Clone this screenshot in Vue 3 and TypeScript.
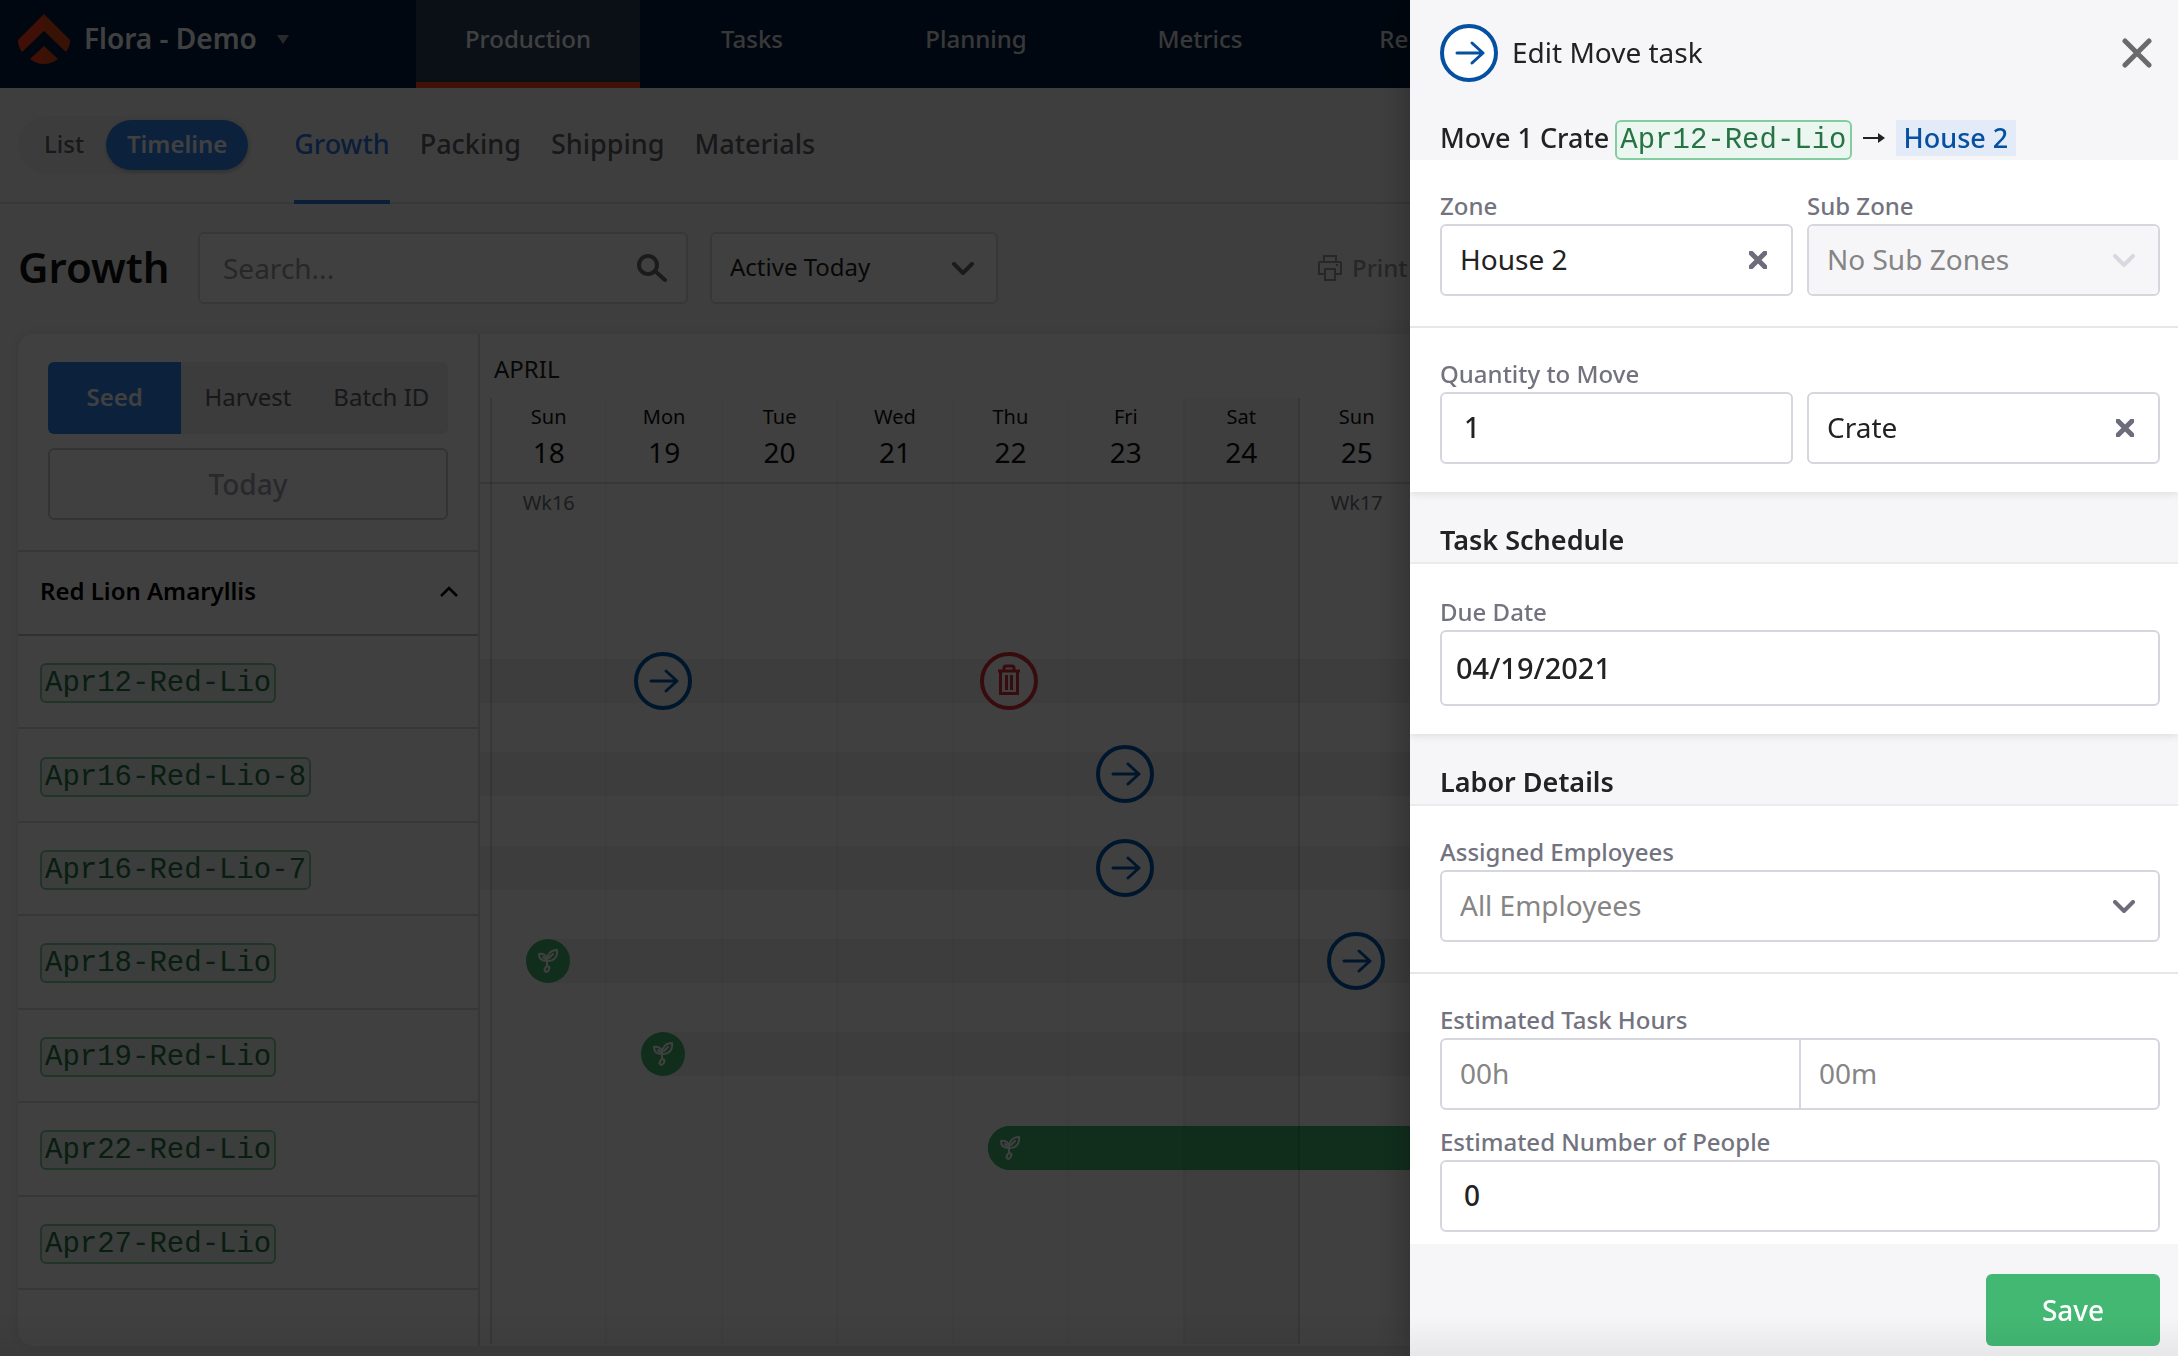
<script setup lang="ts">
import { ref } from 'vue'

interface Marker {
  day: number
  kind: 'move' | 'trash'
}

interface Batch {
  id: string
  seedDay: number | null
  planned: boolean
  hidden: boolean
  markers: Marker[]
}

interface Day {
  name: string
  date: number
  week: string
}

const navItems = ['Production', 'Tasks', 'Planning', 'Metrics', 'Reports']
const sections = ['Growth', 'Packing', 'Shipping', 'Materials']
const groupings = ['Seed', 'Harvest', 'Batch ID']

const names = ['Sun', 'Mon', 'Tue', 'Wed', 'Thu', 'Fri', 'Sat']
const dates = [18, 19, 20, 21, 22, 23, 24, 25, 26, 27, 28, 29, 30, 1]
const days: Day[] = dates.map((date, i) => ({
  name: names[i % 7],
  date,
  week: i === 0 ? 'Wk16' : i === 7 ? 'Wk17' : '',
}))

const batches: Batch[] = [
  { id: 'Apr12-Red-Lio', seedDay: null, planned: false, hidden: false, markers: [{ day: 1, kind: 'move' }, { day: 4, kind: 'trash' }] },
  { id: 'Apr16-Red-Lio-8', seedDay: null, planned: false, hidden: false, markers: [{ day: 5, kind: 'move' }] },
  { id: 'Apr16-Red-Lio-7', seedDay: null, planned: false, hidden: false, markers: [{ day: 5, kind: 'move' }] },
  { id: 'Apr18-Red-Lio', seedDay: 0, planned: false, hidden: false, markers: [{ day: 7, kind: 'move' }] },
  { id: 'Apr19-Red-Lio', seedDay: 1, planned: false, hidden: false, markers: [] },
  { id: 'Apr22-Red-Lio', seedDay: 4, planned: true, hidden: false, markers: [] },
  { id: 'Apr27-Red-Lio', seedDay: null, planned: false, hidden: true, markers: [] },
]

const search = ref('')
const filter = ref('Active Today')
const zone = ref('House 2')
const subZone = ref('No Sub Zones')
const quantity = ref('1')
const unit = ref('Crate')
const dueDate = ref('04/19/2021')
const employees = ref('All Employees')
const hours = ref('')
const minutes = ref('')
const people = ref('0')

// The grid's first column is the sliver left of Sunday the 18th.
const dayColumn = (day: number) => String(day + 2)
const barColumn = (day: number | null) => (day === null ? '1 / -1' : `${day + 2} / -1`)
</script>

<template>
  <div class="page">
    <header class="topbar">
      <button class="farm" type="button">
        <svg class="logo" viewBox="0 0 52 50" aria-hidden="true">
          <path fill="#ff4018" d="M26 0 0 26c0 4 1 8 4 12l22-21z" />
          <path fill="#e04a10" d="M26 0l26 26c0 4-1 8-4 12L26 17z" />
          <path fill="#ff4018" d="M26 32 12 45c4 3 9 5 14 5z" />
          <path fill="#e04a10" d="M26 32l14 13c-4 3-9 5-14 5z" />
        </svg>
        <span>Flora - Demo</span>
        <svg class="caret" viewBox="0 0 12 9" aria-hidden="true"><path fill="#a0a4ac" d="M0 0h12L6 9z" /></svg>
      </button>
      <nav class="nav">
        <a v-for="(item, i) in navItems" :key="item" href="#" :class="{ active: i === 0 }">{{ item }}</a>
      </nav>
    </header>

    <div class="subbar">
      <div class="toggle">
        <button type="button">List</button>
        <button type="button" class="active">Timeline</button>
      </div>
      <nav class="tabs">
        <a v-for="(s, i) in sections" :key="s" href="#" :class="{ active: i === 0 }">{{ s }}</a>
      </nav>
    </div>

    <div class="toolbar">
      <h1>Growth</h1>
      <div class="search">
        <input v-model="search" type="text" placeholder="Search..." aria-label="Search" />
        <svg viewBox="0 0 30 28" aria-hidden="true">
          <circle cx="11" cy="11" r="9" fill="none" stroke="#6c6c74" stroke-width="4" />
          <path d="M18 17l10 9" stroke="#6c6c74" stroke-width="4" stroke-linecap="round" />
        </svg>
      </div>
      <div class="filter">
        <select v-model="filter" aria-label="Filter"><option>Active Today</option></select>
        <svg class="chevron" viewBox="0 0 22 13" aria-hidden="true"><path d="M2 2l9 9 9-9" /></svg>
      </div>
      <button class="print" type="button">
        <svg viewBox="0 0 24 26" fill="none" stroke="#9a9aa6" stroke-width="2" aria-hidden="true">
          <path d="M6 7V1h12v6M6 19H1V8q0-1 1-1h20q1 0 1 1v11h-5" />
          <path d="M7 14h10v11H7z" />
          <path d="M18 10h2" />
        </svg>
        <span>Print</span>
      </button>
    </div>

    <main class="card">
      <aside class="side">
        <div class="controls">
          <div class="segments">
            <button v-for="(g, i) in groupings" :key="g" type="button" :class="{ active: i === 0 }">{{ g }}</button>
          </div>
          <button type="button" class="today">Today</button>
        </div>
        <button type="button" class="group">
          <span>Red Lion Amaryllis</span>
          <svg viewBox="0 0 18 11" fill="none" stroke="#000" stroke-width="2.5" aria-hidden="true"><path d="M1 10l8-8 8 8" /></svg>
        </button>
        <ul class="rows batch-list">
          <li v-for="b in batches" :key="b.id"><a href="#" class="batch">{{ b.id }}</a></li>
        </ul>
      </aside>

      <section class="timeline">
        <div class="month">APRIL</div>
        <div class="canvas">
          <div class="rows tracks">
            <div v-for="b in batches" :key="b.id" class="track day-grid">
              <div
                v-if="!b.hidden"
                class="bar"
                :class="{ seeded: b.seedDay !== null, planned: b.planned }"
                :style="{ gridColumn: barColumn(b.seedDay) }"
              >
                <span v-if="b.seedDay !== null" class="seed">
                  <svg viewBox="0 0 44 44" fill="none" stroke="#fff" stroke-width="2" stroke-linecap="round" aria-hidden="true">
                    <path d="M21 22c-5 0-8-2-8-7 4-1 8 1 8 7zM21 22c0-7 4-11 10-11 1 7-3 11-10 11z" />
                    <path d="M17 18l2 2M27 15l-4 4M21 22v5" />
                    <ellipse cx="21" cy="30" rx="2" ry="3" transform="rotate(30 21 30)" />
                  </svg>
                </span>
              </div>
              <div v-for="m in b.markers" :key="m.day" class="marker" :style="{ gridColumn: dayColumn(m.day) }">
                <svg v-if="m.kind === 'move'" viewBox="0 0 58 58" fill="none" stroke="#0058b0" stroke-width="3" aria-hidden="true">
                  <circle cx="29" cy="29" r="27" fill="#fff" stroke-width="4" />
                  <path d="M17 29h26M32 19l11 10-11 10" stroke-linecap="round" stroke-linejoin="round" />
                </svg>
                <svg v-else viewBox="0 0 58 58" fill="none" stroke="#e03038" stroke-width="3" aria-hidden="true">
                  <circle cx="29" cy="29" r="27" fill="#fff" stroke-width="4" />
                  <path d="M24 18v-2q0-2 2-2h6q2 0 2 2v2M18 19h22" />
                  <path d="M20.500 19v22.500h17V19M26.500 23v15M31.500 23v15" />
                </svg>
              </div>
            </div>
          </div>
          <div class="columns day-grid">
            <div v-for="(d, i) in days" :key="i" class="day" :class="{ sunday: i % 7 === 0, saturday: i % 7 === 6 }" :style="{ gridColumn: dayColumn(i) }">
              <div class="head">
                <span class="name">{{ d.name }}</span>
                <span class="date">{{ d.date }}</span>
              </div>
              <span class="week">{{ d.week }}</span>
            </div>
          </div>
          <div class="rule"></div>
        </div>
      </section>
    </main>
  </div>

  <div class="backdrop"></div>

  <form class="drawer" @submit.prevent>
    <header class="drawer-head">
      <div class="title">
        <svg class="move" viewBox="0 0 58 58" fill="none" stroke="#0550a0" stroke-width="3" aria-hidden="true">
          <circle cx="29" cy="29" r="27" fill="#fff" stroke-width="4" />
          <path d="M17 29h26M32 19l11 10-11 10" stroke-linecap="round" stroke-linejoin="round" />
        </svg>
        <h2>Edit Move task</h2>
        <button type="button" class="close" aria-label="Close">
          <svg viewBox="0 0 30 30" aria-hidden="true"><path d="M3 3l24 24M27 3L3 27" stroke="#6a6a6a" stroke-width="5" stroke-linecap="round" /></svg>
        </button>
      </div>
      <div class="summary">
        <span>Move 1 Crate</span>
        <span class="batch">Apr12-Red-Lio</span>
        <svg viewBox="0 0 24 14" aria-hidden="true"><path d="M1 7h18" stroke="#222" stroke-width="2" /><path fill="#222" d="M16 2l7 5-7 5z" /></svg>
        <span class="place">House 2</span>
      </div>
    </header>

    <section class="fields pair">
      <div class="field">
        <label for="zone">Zone</label>
        <div class="box">
          <select id="zone" v-model="zone"><option>House 2</option></select>
          <button type="button" class="clear" aria-label="Clear zone">
            <svg viewBox="0 0 18 18" aria-hidden="true"><path d="M2 2l14 14M16 2L2 16" /></svg>
          </button>
        </div>
      </div>
      <div class="field">
        <label for="sub-zone">Sub Zone</label>
        <div class="box">
          <select id="sub-zone" v-model="subZone" disabled><option>No Sub Zones</option></select>
          <svg class="chevron pale" viewBox="0 0 22 13" aria-hidden="true"><path d="M2 2l9 9 9-9" /></svg>
        </div>
      </div>
    </section>

    <section class="fields pair last">
      <div class="field">
        <label for="quantity">Quantity to Move</label>
        <div class="box"><input id="quantity" v-model="quantity" type="text" class="number" /></div>
      </div>
      <div class="field">
        <div class="box">
          <select v-model="unit" aria-label="Unit"><option>Crate</option></select>
          <button type="button" class="clear" aria-label="Clear unit">
            <svg viewBox="0 0 18 18" aria-hidden="true"><path d="M2 2l14 14M16 2L2 16" /></svg>
          </button>
        </div>
      </div>
    </section>

    <h3 class="band">Task Schedule</h3>
    <section class="fields schedule last">
      <div class="field">
        <label for="due">Due Date</label>
        <div class="box"><input id="due" v-model="dueDate" type="text" class="due" /></div>
      </div>
    </section>

    <h3 class="band">Labor Details</h3>
    <section class="fields">
      <div class="field">
        <label for="employees">Assigned Employees</label>
        <div class="box">
          <select id="employees" v-model="employees" class="muted"><option>All Employees</option></select>
          <svg class="chevron" viewBox="0 0 22 13" aria-hidden="true"><path d="M2 2l9 9 9-9" /></svg>
        </div>
      </div>
    </section>

    <section class="fields estimates">
      <div class="field">
        <label for="hours">Estimated Task Hours</label>
        <div class="joined">
          <input id="hours" v-model="hours" type="text" placeholder="00h" />
          <input v-model="minutes" type="text" placeholder="00m" aria-label="Minutes" />
        </div>
      </div>
      <div class="field">
        <label for="people">Estimated Number of People</label>
        <div class="box"><input id="people" v-model="people" type="text" class="number" /></div>
      </div>
    </section>

    <footer class="actions"><button type="submit">Save</button></footer>
  </form>

  <div class="fade"></div>
</template>

<style>
html, body { margin: 0; overflow: hidden; }
</style>

<style scoped>
* { box-sizing: border-box; }
.page, .drawer { font-family: "Noto Sans", sans-serif; font-size: 28px; line-height: 36px; color: #222; }
button, input, select { font: inherit; color: inherit; border: 0; background: none; margin: 0; padding: 0; outline: 0; }
select { appearance: none; }
a { color: inherit; text-decoration: none; }
h1, h2, h3, ul { margin: 0; padding: 0; list-style: none; }
svg { display: block; flex: none; }

.page { display: flex; flex-direction: column; height: 100vh; background: #f8f8f8; overflow: hidden; }

.topbar { display: flex; flex: none; height: 88px; background: #001d40; color: #fff; }
.farm { display: flex; align-items: center; width: 416px; padding: 0 18px 10px; font-weight: 600; }
.farm .logo { width: 52px; height: 50px; margin-right: 14px; }
.farm .caret { width: 12px; height: 9px; margin-left: 20px; }
.farm span { padding-bottom: 2px; }
.nav { display: flex; font-size: 24px; font-weight: 500; color: #e0e0e0; }
.nav a { display: flex; flex: none; align-items: center; justify-content: center; width: 224px; padding-bottom: 4px; border-bottom: 6px solid transparent; }
.nav a.active { background: #284058; border-color: #ff4418; color: #fff; }

.subbar { display: flex; flex: none; height: 116px; padding: 0 18px; gap: 42px; align-items: center; border-bottom: 2px solid #dfdfe2; }
.toggle { display: flex; padding: 4px; border-radius: 29px; background: #f0f0f0; font-size: 24px; font-weight: 500; color: #66666c; }
.toggle button { height: 50px; padding: 0 22px 2px; border-radius: 25px; }
.toggle .active { width: 142px; padding: 0 0 2px; background: #3084f0; color: #fff; font-weight: 600; box-shadow: 0 2px 4px rgba(0, 0, 0, .2); }
.tabs { display: flex; align-self: stretch; gap: 30px; margin-bottom: -2px; font-size: 27px; font-weight: 500; color: #606068; }
.tabs a { display: flex; align-items: center; border-bottom: 4px solid transparent; }
.tabs .active { border-color: #2a7ae8; color: #2a7ae8; }

.toolbar { display: flex; flex: none; align-items: center; padding: 28px 18px 30px; }
.toolbar h1 { width: 180px; padding-bottom: 2px; font-size: 42px; line-height: 56px; font-weight: 600; color: #101010; }
.search { display: flex; align-items: center; width: 490px; height: 72px; padding: 0 19px 0 23px; border: 2px solid #dcdce0; border-radius: 6px; background: #fff; }
.search input { flex: 1; min-width: 0; }
.search input::placeholder { color: #9c9ca6; opacity: 1; }
.search svg { width: 30px; height: 28px; }
.filter { display: flex; align-items: center; width: 288px; height: 72px; margin-left: 22px; padding: 0 22px 0 18px; border: 2px solid #dcdce0; border-radius: 6px; background: #fff; font-size: 24px; }
.filter select { flex: 1; padding-bottom: 2px; }
.print { display: flex; align-items: center; gap: 10px; margin-left: 320px; font-size: 24px; font-weight: 500; color: #9a9aa6; }
.print svg { width: 24px; height: 26px; }
.chevron { width: 22px; height: 13px; fill: none; stroke: #6c6c7a; stroke-width: 4; stroke-linecap: round; stroke-linejoin: round; }
.chevron.pale { stroke: #d8d8e0; }

.card { display: flex; flex: 1; min-height: 0; margin: 0 0 10px 18px; border-radius: 16px; background: #fff; box-shadow: 0 0 16px rgba(0, 0, 0, .1); overflow: hidden; }
.side { display: flex; flex: none; flex-direction: column; width: 462px; border-right: 2px solid #dadada; }
.controls { display: flex; flex-direction: column; gap: 14px; padding: 28px 30px 30px; border-bottom: 2px solid #dadada; }
.segments { display: flex; height: 72px; border-radius: 6px; background: #ededed; font-size: 24px; color: #60606a; overflow: hidden; }
.segments button { flex: 1; padding-bottom: 2px; }
.segments .active { background: #3084f0; color: #fff; font-weight: 600; }
.today { height: 72px; border: 2px solid #cacaca; border-radius: 6px; font-weight: 500; color: #a4a4ae; }
.group { display: flex; flex: none; align-items: center; justify-content: space-between; height: 84px; padding: 0 20px 4px 22px; border-bottom: 2px solid #c4c4c4; font-size: 24px; font-weight: 600; color: #000; }
.group svg { width: 18px; height: 11px; }

.rows { display: grid; flex: none; grid-template-rows: repeat(7, 1fr); height: 654px; }
.batch-list li { display: flex; align-items: center; padding: 3px 0 0 22px; border-bottom: 2px solid #dadada; }
.batch { display: inline-block; height: 40px; padding: 0 3px; border: 2px solid #84cda0; border-radius: 6px; background: #ebf6f0; color: #267343; font-family: "Liberation Mono", monospace; font-size: 29px; line-height: 38px; font-weight: 400; }

.timeline { display: flex; flex: none; flex-direction: column; width: 1626px; }
.month { height: 64px; padding: 18px 14px 0; font-size: 24px; line-height: 34px; }
.canvas { display: grid; flex: 1; margin-bottom: 2px; }
.canvas > * { grid-area: 1 / 1; }
.day-grid { display: grid; grid-template-columns: 10px repeat(14, 1fr); }
.tracks { margin-top: 238px; }
.track { padding-bottom: 4px; align-items: center; }
.track > * { grid-row: 1; }
.bar { height: 44px; background: #f2f2f2; }
.bar.seeded { margin-left: 36px; border-radius: 22px 0 0 22px; }
.bar.planned { background: #43b873; }
.seed { display: block; width: 44px; height: 44px; border-radius: 50%; background: #43b873; }
.marker { justify-self: center; width: 58px; height: 58px; }
.day { display: flex; flex-direction: column; align-items: center; border-left: 2px solid rgba(0, 0, 0, .03); color: #101010; }
.day.sunday { border-color: rgba(0, 0, 0, .15); }
.day.saturday { background: rgba(0, 0, 0, .03); }
.head { display: flex; flex-direction: column; align-items: center; height: 86px; padding-top: 5px; }
.name { font-size: 20px; line-height: 28px; }
.date { line-height: 42px; }
.week { padding-top: 4px; font-size: 20px; line-height: 30px; color: #70707a; }
.rule { height: 86px; border-bottom: 2px solid rgba(0, 0, 0, .15); }

.backdrop { position: fixed; inset: 0; background: rgba(0, 0, 0, .75); }

.drawer { position: fixed; top: 0; right: 0; bottom: 0; display: flex; flex-direction: column; width: 768px; background: #f6f6f9; box-shadow: 0 0 36px rgba(0, 0, 0, .35); }
.drawer-head { padding: 24px 18px 0 30px; }
.title { display: flex; align-items: center; }
.move { width: 58px; height: 58px; }
.title h2 { flex: 1; margin-left: 14px; padding-bottom: 2px; font-size: 28px; font-weight: 400; }
.close { padding: 8px; }
.close svg { width: 30px; height: 30px; }
.summary { display: flex; align-items: flex-start; margin-top: 38px; font-size: 27px; font-weight: 500; }
.summary .batch { margin-left: 6px; }
.summary svg { width: 24px; height: 14px; margin: 11px 10px; }
.place { padding: 0 8px; background: #e3ebf8; color: #0550a0; }

.fields { position: relative; padding: 32px 18px 30px 30px; border-bottom: 2px solid #e6e6eb; background: #fff; }
.fields.last { padding-bottom: 28px; border-bottom: 0; box-shadow: 0 2px 8px rgba(0, 0, 0, .1); clip-path: inset(0 0 -16px 0); }
.fields.schedule { padding-top: 34px; }
.fields.pair { display: flex; gap: 14px; align-items: flex-end; }
.pair .field { flex: 1; }
.field label { display: block; margin-bottom: 4px; font-size: 24px; line-height: 28px; font-weight: 500; color: #737380; }
.box { position: relative; display: flex; align-items: center; height: 72px; border: 2px solid #d6d6de; border-radius: 6px; background: #fff; }
.box input, .box select { flex: 1; width: 100%; height: 100%; padding: 0 18px 2px; border-radius: 6px; }
.box input { font-weight: 500; }
.box .number { padding-left: 22px; }
.box select:disabled { background: #f6f6f9; color: #858585; opacity: 1; }
.box .muted { color: #858585; }
.box .chevron { position: absolute; right: 23px; pointer-events: none; }
.clear { position: absolute; right: 22px; padding: 2px; }
.clear svg { width: 18px; height: 18px; stroke: #6c6c7a; stroke-width: 5; stroke-linecap: round; }
.band { flex: none; height: 72px; padding: 30px 30px 0; border-bottom: 2px solid #ebebee; font-size: 27px; font-weight: 600; line-height: 36px; }
.box:has(.due) { height: 76px; }
.box .due { padding-left: 14px; font-size: 29px; }
.joined { display: flex; height: 72px; border: 2px solid #d6d6de; border-radius: 6px; }
.joined input { flex: 1; min-width: 0; padding: 0 18px 2px; }
.joined input + input { border-left: 2px solid #d6d6de; }
.joined input::placeholder { color: #858585; opacity: 1; }
.estimates { display: flex; flex-direction: column; gap: 18px; padding-bottom: 12px; border-bottom: 0; }
.actions { display: flex; justify-content: flex-end; padding: 30px 18px 10px; }
.actions button { width: 174px; height: 72px; border-radius: 6px; background: #43b873; color: #fff; font-weight: 500; }

.fade { position: fixed; right: 0; bottom: 0; left: 0; height: 40px; background: linear-gradient(transparent, rgba(0, 0, 0, .06)); pointer-events: none; }
</style>
